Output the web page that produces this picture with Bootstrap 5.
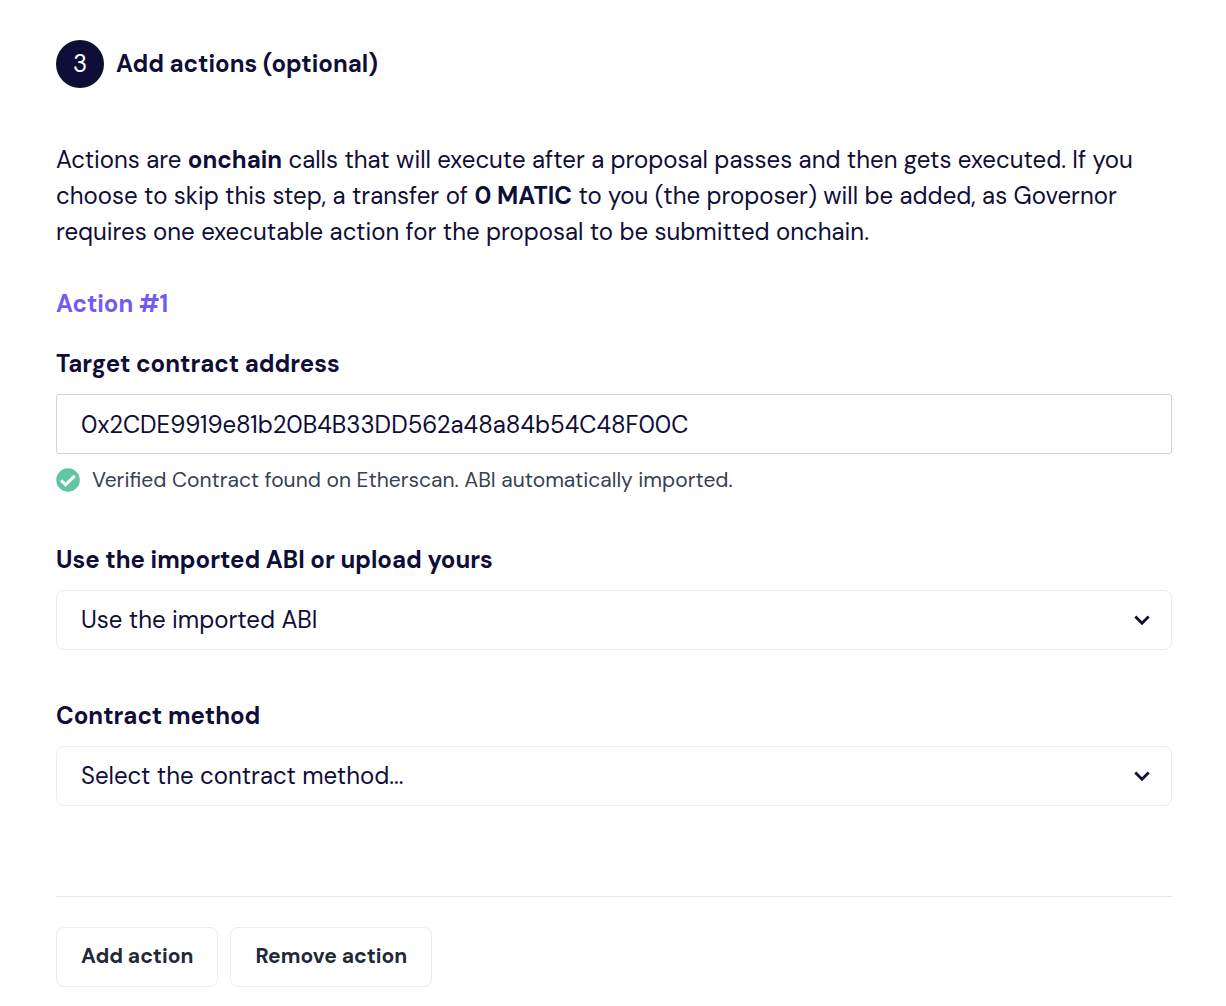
<!DOCTYPE html>
<html lang="en">
<head>
<meta charset="utf-8">
<meta name="viewport" content="width=device-width, initial-scale=1">
<title>Add actions</title>
<link rel="stylesheet" href="https://cdn.jsdelivr.net/npm/bootstrap@5.3.0/dist/css/bootstrap.min.css">
<style>
  :root { --ink: #0f0e38; --slate: #374151; --violet: #725bf4; }
  body { font-family: "DM Sans", Inter, sans-serif; font-size: 24px; line-height: 36px; color: var(--ink); background: #fff; }
  .page { padding: 40px 54px 16px 56px; }
  .step-number { width: 48px; height: 48px; background: var(--ink); }
  .step-title, .action-title, .field-label { font-size: 24px; line-height: 36px; font-weight: 700; }
  .intro { margin: 54px 0 36px; }
  .intro strong { font-weight: 700; }
  .action-title { color: var(--violet); margin-bottom: 24px; }
  .field-label { margin-bottom: 12px; }
  .field-box { height: 60px; padding: 0 24px; font-size: 24px; line-height: 36px; color: var(--ink); border: 1px solid #ececf0; border-radius: 8px; background: #fff; }
  .field-box:focus { color: var(--ink); }
  .address-box { border-color: #d0d3de; border-radius: 3px; }
  .field-hint { gap: 12px; margin-top: 10px; font-size: 21px; line-height: 32px; color: var(--slate); }
  .field-group { margin-bottom: 46px; }
  .select-group { margin-bottom: 48px; }
  .chevron { right: 22px; }
  .actions-bar { border-top: 1px solid #e2e8f0; margin-top: 90px; padding-top: 30px; gap: 12px; }
  .action-btn { height: 60px; padding: 0 24px; font-size: 21px; font-weight: 700; color: #1f2937; background: #fff; border: 1px solid #ececf0; border-radius: 8px; }
</style>
<script src="https://cdn.jsdelivr.net/npm/bootstrap@5.3.0/dist/js/bootstrap.bundle.min.js" defer></script>
</head>
<body>
<main class="page">
  <header class="d-flex align-items-center gap-2">
    <span class="step-number rounded-circle text-white d-flex align-items-center justify-content-center me-1">3</span>
    <h1 class="step-title mb-0">Add actions (optional)</h1>
  </header>

  <p class="intro">Actions are <strong>onchain</strong> calls that will execute after a proposal passes and then gets executed. If you choose to skip this step, a transfer of <strong>0 MATIC</strong> to you (the proposer) will be added, as Governor requires one executable action for the proposal to be submitted onchain.</p>

  <form>
    <h2 class="action-title">Action #1</h2>

    <div class="field-group">
      <label class="field-label d-block" for="address">Target contract address</label>
      <input class="form-control field-box address-box" id="address" type="text" value="0x2CDE9919e81b20B4B33DD562a48a84b54C48F00C" aria-describedby="address-hint" spellcheck="false">
      <div class="field-hint d-flex align-items-center" id="address-hint">
        <svg width="24" height="24" viewBox="0 0 24 24" aria-hidden="true"><circle cx="12" cy="12" r="11.8" fill="#62c6a5"/><path d="M5 12.300 9.600 16.600 18.800 7.800" fill="none" stroke="#fff" stroke-width="3"/></svg>
        <span>Verified Contract found on Etherscan. ABI automatically imported.</span>
      </div>
    </div>

    <div class="select-group">
      <label class="field-label d-block" for="abi">Use the imported ABI or upload yours</label>
      <div class="position-relative d-flex align-items-center">
        <select class="form-control field-box" id="abi"><option>Use the imported ABI</option><option>Upload my ABI</option></select>
        <svg class="chevron position-absolute pe-none" width="16" height="12" viewBox="0 0 16 12" aria-hidden="true"><path d="M1.300 2.500 8 9.200 14.700 2.500" fill="none" stroke="#0f0e38" stroke-width="2.800"/></svg>
      </div>
    </div>

    <div>
      <label class="field-label d-block" for="method">Contract method</label>
      <div class="position-relative d-flex align-items-center">
        <select class="form-control field-box" id="method"><option>Select the contract method...</option></select>
        <svg class="chevron position-absolute pe-none" width="16" height="12" viewBox="0 0 16 12" aria-hidden="true"><path d="M1.300 2.500 8 9.200 14.700 2.500" fill="none" stroke="#0f0e38" stroke-width="2.800"/></svg>
      </div>
    </div>

    <div class="actions-bar d-flex">
      <button class="btn action-btn" type="button">Add action</button>
      <button class="btn action-btn" type="button">Remove action</button>
    </div>
  </form>
</main>
</body>
</html>
